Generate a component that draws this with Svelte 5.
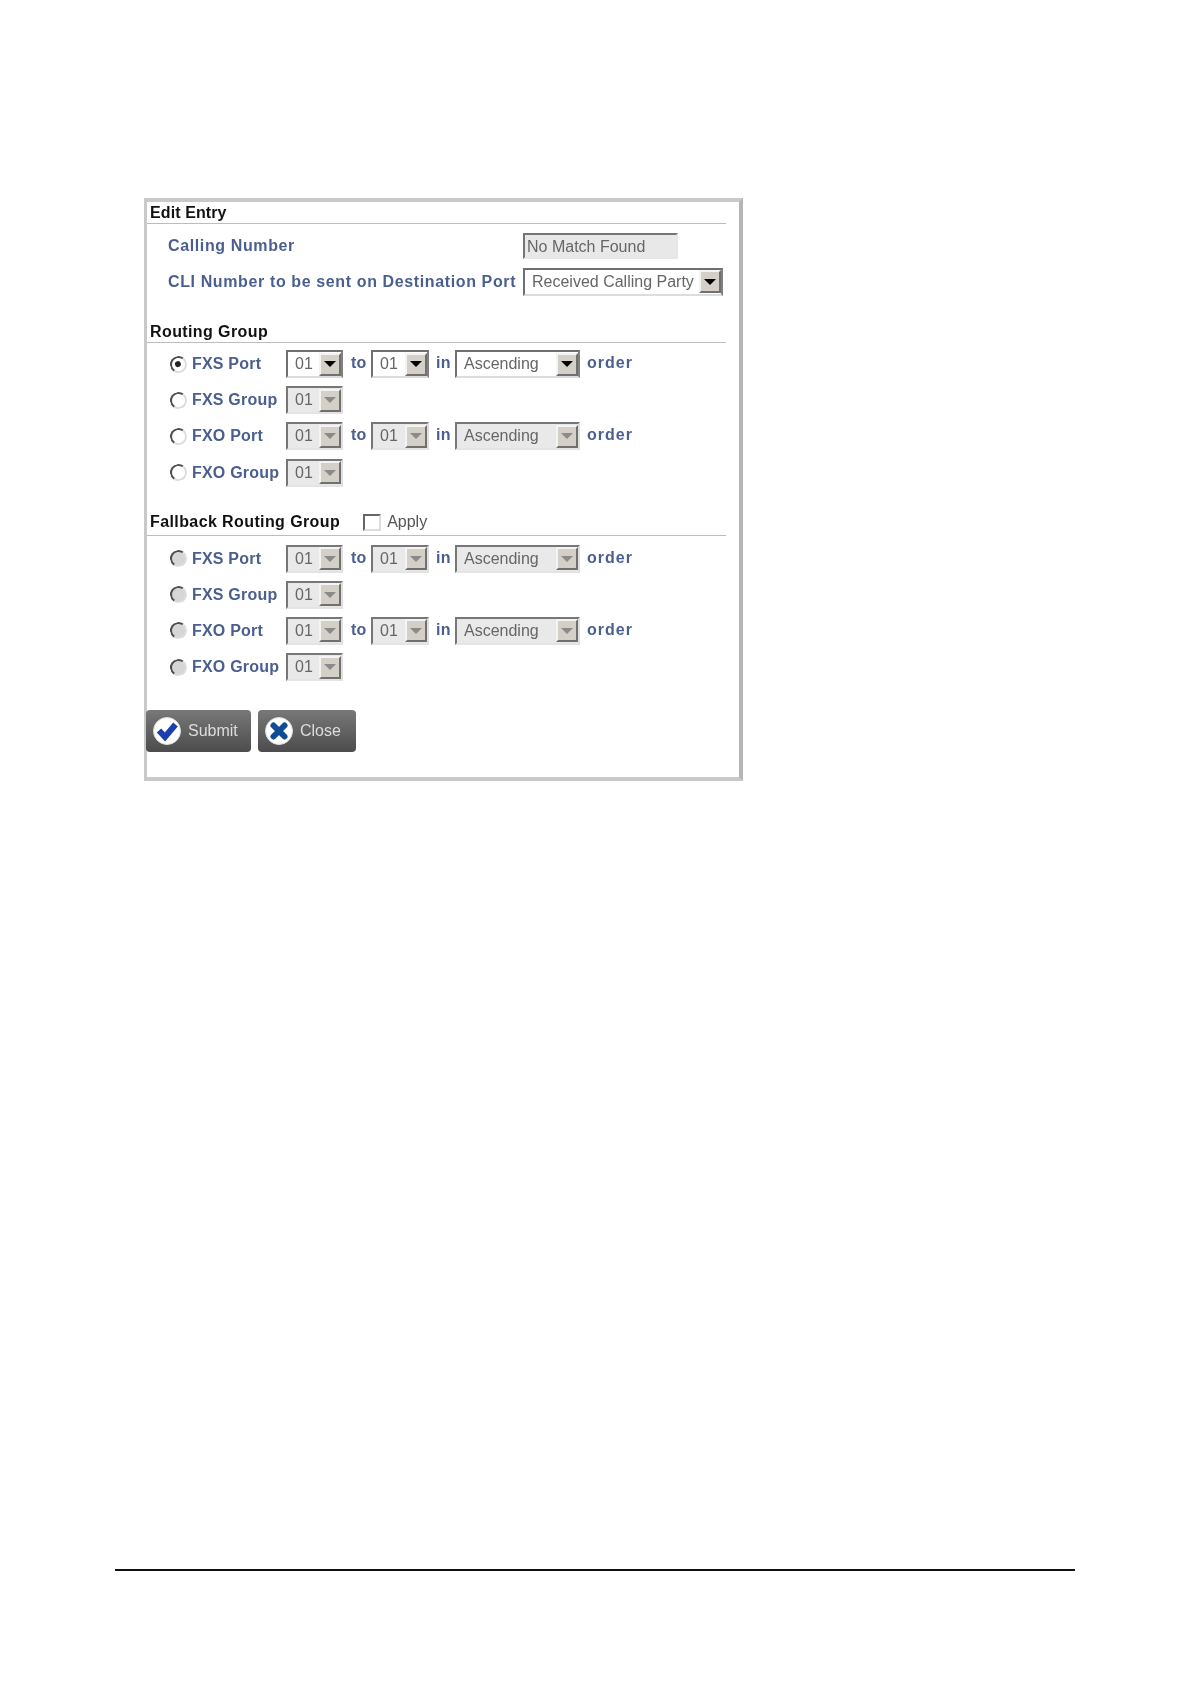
<script>
  const groups = [
    { title: 'Routing Group', apply: false, off: false },
    { title: 'Fallback Routing Group', apply: true, off: true }
  ];
  const rows = [
    { label: 'FXS Port', range: true },
    { label: 'FXS Group', range: false },
    { label: 'FXO Port', range: true },
    { label: 'FXO Group', range: false }
  ];
</script>

{#snippet dropdown(value, width, disabled)}
  <div class="select" class:disabled style="width: {width}px">
    <span class="value">{value}</span>
    <span class="arrow-btn"><i class="arrow"></i></span>
  </div>
{/snippet}

<div class="page">
  <div class="panel">
    <div class="heading">Edit Entry</div>
    <div class="field first">
      <span class="label">Calling Number</span>
      <div class="readonly">No Match Found</div>
    </div>
    <div class="field">
      <span class="label">CLI Number to be sent on Destination Port</span>
      {@render dropdown('Received Calling Party', 200, false)}
    </div>

    {#each groups as group, g}
      <div class="heading spaced" class:fallback={group.apply}>
        {group.title}
        {#if group.apply}
          <span class="check"></span>
          <span class="apply">Apply</span>
        {/if}
      </div>
      <div class="rows">
        {#each rows as row, i}
          {@const off = group.off || i > 0}
          <div class="row">
            <span class="radio" class:checked={g === 0 && i === 0} class:grey={group.off}></span>
            <span class="label name">{row.label}</span>
            {@render dropdown('01', 57, off)}
            {#if row.range}
              <span class="label to">to</span>
              {@render dropdown('01', 58, off)}
              <span class="label in">in</span>
              {@render dropdown('Ascending', 125, off)}
              <span class="label order">order</span>
            {/if}
          </div>
        {/each}
      </div>
    {/each}

    <div class="actions">
      <button class="btn submit">
        <svg viewBox="0 0 28 28" width="28" height="28">
          <circle cx="14" cy="14" r="13.5" fill="#fff" stroke="#ddd" stroke-width="1" />
          <path d="M6 13.5 L12 20 L22.5 7.5" fill="none" stroke="#1c3fb0" stroke-width="6" />
        </svg>
        Submit
      </button>
      <button class="btn close">
        <svg viewBox="0 0 28 28" width="28" height="28">
          <circle cx="14" cy="14" r="13.5" fill="#fff" stroke="#ddd" stroke-width="1" />
          <path d="M8.5 8.5 L19.5 19.5 M19.5 8.5 L8.5 19.5" fill="none" stroke="#0f4c96" stroke-width="6" stroke-linecap="round" />
        </svg>
        Close
      </button>
    </div>
  </div>

  <div class="footer-line"></div>
</div>

<style>
  :global(body) {
    background: #fff;
  }

  .page {
    width: 1190px;
    height: 1684px;
    box-sizing: border-box;
    padding: 198px 0 0 144px;
    font-family: "Liberation Sans", Arial, sans-serif;
    font-size: 16px;
  }

  .panel {
    width: 599px;
    height: 583px;
    box-sizing: border-box;
    border: 4px solid #c9c9c9;
    border-left-width: 3px;
    border-right-color: #b6b6b6;
    padding: 0 13px 0 0;
    filter: blur(0.5px);
  }

  .heading {
    display: flex;
    align-items: center;
    height: 22px;
    box-sizing: border-box;
    padding-left: 3px;
    border-bottom: 1.5px solid #bdbdbd;
    font-weight: bold;
    color: #111;
    letter-spacing: 0.1px;
  }

  .heading.spaced {
    margin-top: 25px;
    padding-top: 2px;
    border-bottom-width: 1px;
    letter-spacing: 0.4px;
  }

  .heading.fallback {
    height: 24px;
    margin-top: 25px;
    padding-top: 0;
    padding-bottom: 2px;
  }

  .fallback + .rows {
    margin-top: 9px;
  }

  .check {
    width: 18px;
    height: 17px;
    box-sizing: border-box;
    margin-left: 23px;
    border: 2px solid;
    border-color: #666 #ddd #ddd #666;
    background: #fff;
  }

  .apply {
    margin-left: 6px;
    font-weight: normal;
    color: #555;
    letter-spacing: 0;
  }

  .field {
    display: flex;
    align-items: center;
    margin-top: 8.5px;
    padding-left: 21px;
  }

  .field.first {
    margin-top: 9px;
  }

  .field .label {
    width: 355px;
    flex: none;
    white-space: nowrap;
    letter-spacing: 0.62px;
  }

  .label {
    font-weight: bold;
    color: #4a5f90;
    letter-spacing: 0.2px;
  }

  .readonly {
    width: 155px;
    height: 26px;
    box-sizing: border-box;
    padding-left: 2px;
    line-height: 24px;
    border: 2px solid;
    border-color: #757575 #e6e6e6 #e6e6e6 #757575;
    background: #e8e8e8;
    color: #666;
  }

  .rows {
    display: flex;
    flex-direction: column;
    gap: 8.2px;
    margin-top: 7.5px;
    padding-left: 23px;
  }

  .row {
    display: flex;
    align-items: center;
    height: 28px;
  }

  .radio {
    position: relative;
    flex: none;
    width: 17px;
    height: 17px;
    box-sizing: border-box;
    margin-right: 5px;
    border: 2.5px solid;
    border-color: #4f4f4f #ddd #ddd #4f4f4f;
    border-radius: 50%;
    background: #fff;
    transform: rotate(-10deg);
  }

  .radio.grey {
    background: #d6d6d6;
  }

  .radio.checked::after {
    content: '';
    position: absolute;
    left: 3px;
    top: 3px;
    width: 6px;
    height: 6px;
    border-radius: 50%;
    background: #222;
  }

  .name {
    width: 94px;
    flex: none;
  }

  .to {
    width: 20px;
    padding-left: 8px;
  }

  .in {
    width: 19px;
    padding-left: 7px;
  }

  .order {
    margin-left: 7px;
    letter-spacing: 1px;
  }

  .to,
  .in,
  .order {
    position: relative;
    top: -1px;
  }

  .select {
    display: flex;
    align-items: center;
    flex: none;
    height: 28px;
    box-sizing: border-box;
    border: 2px solid;
    border-color: #707070 #808080 #dcdcdc #707070;
    background: #fff;
    color: #666;
  }

  .select.disabled {
    border-color: #777 #e0e0e0 #e4e4e4 #777;
    background: #e9e9e9;
  }

  .value {
    flex: 1;
    padding-left: 7px;
    white-space: nowrap;
  }

  .arrow-btn {
    display: flex;
    align-items: center;
    justify-content: center;
    flex: none;
    width: 22px;
    height: 23px;
    box-sizing: border-box;
    border: 2px solid;
    border-color: #f4f4f4 #707070 #707070 #f4f4f4;
    background: #d4d0c8;
  }

  .arrow {
    width: 0;
    height: 0;
    border: 6px solid transparent;
    border-top: 6px solid #000;
    border-bottom: 0;
  }

  .disabled .arrow {
    border-top-color: #8a8a8a;
  }

  .actions {
    display: flex;
    gap: 7px;
    margin: 29px 0 0 -1px;
  }

  .btn {
    display: flex;
    align-items: center;
    height: 42px;
    padding: 0 0 0 7px;
    border: 0;
    border-radius: 4px;
    background: linear-gradient(#787878, #4c4c4c);
    color: #ddd;
    font-family: inherit;
    font-size: 16px;
    position: relative;
    z-index: 1;
  }

  .btn svg {
    margin-right: 7px;
  }

  .submit {
    width: 105px;
  }

  .close {
    width: 98px;
  }

  .footer-line {
    width: 960px;
    height: 1.5px;
    margin: 788px 0 0 -29px;
    background: #111;
  }
</style>
